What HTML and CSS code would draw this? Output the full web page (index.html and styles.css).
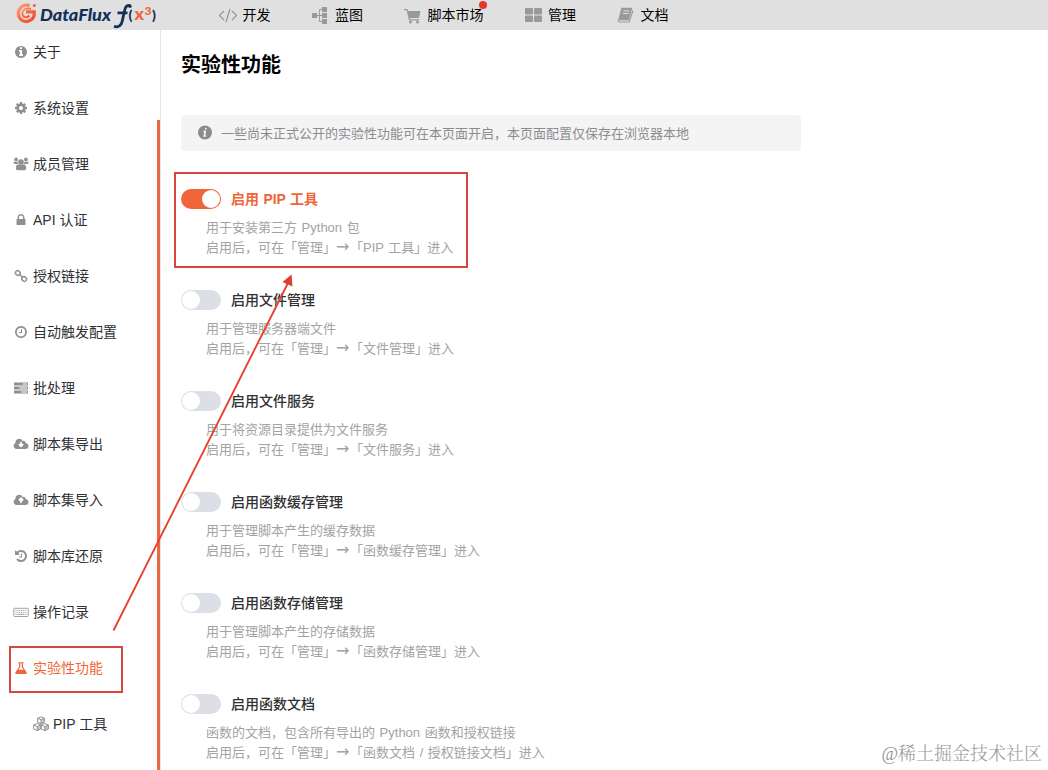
FILE: index.html
```html
<!DOCTYPE html>
<html lang="zh-CN">
<head>
  <meta charset="UTF-8">
  <title>实验性功能</title>
  <link rel="stylesheet" href="styles.css">
</head>
<body>
  <div class="navbar">
    <svg class="logo" width="146" height="30" viewBox="0 0 146 30">
      <defs>
        <linearGradient id="logoColor" x1="0" y1="0" x2="1" y2="1">
          <stop offset="0" stop-color="#ffa584"/>
          <stop offset="0.5" stop-color="#f7683f"/>
          <stop offset="1" stop-color="#ef4a35"/>
        </linearGradient>
      </defs>
      <g fill="none" stroke="url(#logoColor)">
        <path d="M13.500 5.500C7 3.500 2.200 8 2.300 13.500C2.700 20 8 22.500 12.500 21C17 19.500 18.600 16 18.300 11.800H10" stroke-width="3.200"/>
        <path d="M15 8.800C10.500 7.500 6.300 9.500 6.300 13.500C6.500 17.500 11 18.500 13.500 15.500" stroke-width="2"/>
      </g>
      <circle cx="18.300" cy="5.500" r="1.500" fill="#f4623f"/>
      <text class="logo-name" x="24" y="20.500" textLength="71" lengthAdjust="spacingAndGlyphs">DataFlux</text>
      <path d="M114.500 6C110.500 4 109 7.500 108 13L106.300 21C105.400 25.500 102.500 28 98 26.300M101.500 12.800H111.500" fill="none" stroke="#14305a" stroke-width="2.800"/>
      <circle cx="114" cy="6.300" r="1.700" fill="#14305a"/>
      <text class="logo-paren" x="112.500" y="19.500">(</text>
      <text class="logo-x" x="118.500" y="20" textLength="9.500" lengthAdjust="spacingAndGlyphs">x</text>
      <text class="logo-pow" x="128.500" y="15">3</text>
      <text class="logo-paren" x="136" y="19.500">)</text>
    </svg>
    <div class="nav-links">
      <a><svg width="20" height="20" viewBox="0 0 20 20" fill="none" stroke="#999" stroke-width="1.300"><path d="M6 6L1.500 10.500L6 15M14 6L18.500 10.500L14 15M12 4L8 17"/></svg>开发</a>
      <a><svg width="20" height="20" viewBox="0 0 20 20" fill="#999"><path d="M1 8h5v5H1zM11 2h5v5h-5zM11 8h5v5h-5zM11 14h5v5h-5z"/><path d="M6 10.500h5M11 4.500H8.500v12H11" fill="none" stroke="#999"/></svg>蓝图</a>
      <a><svg width="20" height="20" viewBox="0 0 20 20" fill="#999"><path d="M1 4h3.500l.5 2h12.500l-1.500 7H7l.3 1.300H16v1.200H6L3.700 5.200H1z"/><circle cx="7.500" cy="17" r="1.500"/><circle cx="14.500" cy="17" r="1.500"/></svg>脚本市场<i class="dot"></i></a>
      <a><svg width="20" height="20" viewBox="0 0 20 20" fill="#999"><rect x="1" y="3" width="8" height="6.500" rx="1"/><rect x="10" y="3" width="8" height="6.500" rx="1"/><rect x="1" y="10.500" width="8" height="6.500" rx="1"/><rect x="10" y="10.500" width="8" height="6.500" rx="1"/></svg>管理</a>
      <a><svg width="20" height="20" viewBox="0 0 20 20"><path d="M6 3.500h9.500L12 14.500H3.200z" fill="#999" stroke="#999" stroke-width="1.500" stroke-linejoin="round"/><path d="M7.500 6h6M6.800 8.500h6" stroke="#e0e0e0"/><path d="M2.600 14.500c-1 1.500 0 2.500 1 2.500h9.400l4-11.500" fill="none" stroke="#999" stroke-width="1.200"/></svg>文档</a>
    </div>
  </div>

  <div class="main">
    <div class="sidebar">
      <div class="menu" id="menu"></div>
      <div class="scrollbar"></div>
    </div>

    <div class="content">
      <h1>实验性功能</h1>
      <div class="alert">
        <svg width="16" height="16" viewBox="0 0 16 16"><circle cx="8" cy="7.500" r="7" fill="#8c8c90"/><path d="M9 2.800l-.3 1.500M6.600 6.300H8.200L7.300 11H9" fill="none" stroke="#f4f4f5" stroke-width="1.700"/></svg>
        <span>一些尚未正式公开的实验性功能可在本页面开启，本页面配置仅保存在浏览器本地</span>
      </div>
      <div id="features"></div>
    </div>
  </div>

  <div class="mark mark-menu"></div>
  <div class="mark mark-feature"></div>
  <svg class="pointer" width="200" height="370" viewBox="100 270 200 370">
    <path d="M113.500 630.500L288 283" stroke="#e5432f" stroke-width="1.900"/>
    <path d="M291.500 274.500L292.500 286.500L282.500 282z" fill="#e03c31"/>
  </svg>
  <div class="watermark">@稀土掘金技术社区</div>

  <script>
    const icons = {
      info: '<path d="M1152 1376v-160q0-14-9-23t-23-9h-96v-512q0-14-9-23t-23-9h-320q-14 0-23 9t-9 23v160q0 14 9 23t23 9h96v320h-96q-14 0-23 9t-9 23v160q0 14 9 23t23 9h448q14 0 23-9t9-23zm-128-896v-160q0-14-9-23t-23-9h-192q-14 0-23 9t-9 23v160q0 14 9 23t23 9h192q14 0 23-9t9-23zm640 416q0 209-103 385.500t-279.500 279.500-385.500 103-385.500-103-279.500-279.500-103-385.500 103-385.500 279.500-279.500 385.500-103 385.500 103 279.500 279.500 103 385.500z"/>',
      cog: '<path d="M1152 896q0-106-75-181t-181-75-181 75-75 181 75 181 181 75 181-75 75-181zm512-109v222q0 12-8 23t-20 13l-185 28q-19 54-39 91 35 50 107 138 10 12 10 25t-9 23q-27 37-99 108t-94 71q-12 0-26-9l-138-108q-44 23-91 38-16 136-29 186-7 28-36 28h-222q-14 0-24.500-8.500t-11.500-21.500l-28-184q-49-16-90-37l-141 107q-10 9-25 9-14 0-25-11-126-114-165-168-7-10-7-23 0-12 8-23 15-21 51-66.500t54-70.500q-27-50-41-99l-183-27q-13-2-21-12.500t-8-23.500v-222q0-12 8-23t19-13l186-28q14-46 39-92-40-57-107-138-10-12-10-24 0-10 9-23 26-36 98.500-107.500t94.500-71.500q13 0 26 10l138 107q44-23 91-38 16-136 29-186 7-28 36-28h222q14 0 24.500 8.500t11.500 21.500l28 184q49 16 90 37l142-107q9-9 24-9 13 0 25 10 129 119 165 170 7 8 7 22 0 12-8 23-15 21-51 66.500t-54 70.500q26 50 41 98l183 28q13 2 21 12.500t8 23.500z"/>',
      users: '<circle cx="896" cy="640" r="360"/><circle cx="270" cy="310" r="240"/><circle cx="1522" cy="310" r="240"/><path d="M500 920q396 200 792 0q270 90 270 480q0 300-230 300H460q-230 0-230-300q0-390 270-480zM20 570q220 60 430 0q0 200 120 330H200q-270 0-270-150q0-140 90-180zM1772 570q-220 60-430 0q0 200-120 330h370q270 0 270-150q0-140-90-180z"/>',
      lock: '<path d="M640 768h512v-192q0-106-75-181t-181-75-181 75-75 181v192zm832 96v576q0 40-28 68t-68 28h-960q-40 0-68-28t-28-68v-576q0-40 28-68t68-28h32v-192q0-184 132-316t316-132 316 132 132 316v192h32q40 0 68 28t28 68z"/>',
      link: '<g fill="none" stroke="currentColor" stroke-width="190"><rect x="180" y="240" width="620" height="540" rx="260" transform="rotate(40 490 510)"/><rect x="1000" y="1010" width="620" height="540" rx="260" transform="rotate(40 1310 1280)"/><path d="M640 650L1150 1130"/></g>',
      clock: '<path d="M1024 544v448q0 14-9 23t-23 9h-320q-14 0-23-9t-9-23v-64q0-14 9-23t23-9h224v-352q0-14 9-23t23-9h64q14 0 23 9t9 23zm416 352q0-148-73-273t-198-198-273-73-273 73-198 198-73 273 73 273 198 198 273 73 273-73 198-198 73-273zm224 0q0 209-103 385.500t-279.500 279.500-385.500 103-385.500-103-279.500-279.500-103-385.500 103-385.500 279.500-279.500 385.500-103 385.500 103 279.500 279.500 103 385.500z"/>',
      tasks: '<path d="M0 180h1792v390H0zM0 700h1792v390H0zM0 1220h1792v390H0z"/><path d="M1130 375h540M700 895h970M950 1415h720" stroke="#fff" stroke-width="130"/>',
      download: '<path d="M-50 1120q0-260 240-380q-10-490 460-530q330-10 460 300q330-90 410 250q330 70 330 380q0 370-390 400H350q-400-30-400-420z"/><path d="M900 600v500M620 920l280 280l280-280" fill="none" stroke="#fff" stroke-width="210"/>',
      upload: '<path d="M-50 1120q0-260 240-380q-10-490 460-530q330-10 460 300q330-90 410 250q330 70 330 380q0 370-390 400H350q-400-30-400-420z"/><path d="M900 1280V750M620 950l280-280l280 280" fill="none" stroke="#fff" stroke-width="210"/>',
      history: '<path d="M1664 896q0 156-61 298t-164 245-245 164-298 61q-172 0-327-72.500t-264-204.500q-7-10-6.500-22.500t8.500-20.500l137-138q10-9 25-9 16 2 23 12 73 95 179 147t225 52q104 0 198.500-40.500t163.500-109.500 109.500-163.500 40.500-198.500-40.500-198.500-109.500-163.500-163.500-109.500-198.500-40.500q-98 0-188 35.500t-160 101.500l137 138q31 30 14 69-17 40-59 40h-448q-26 0-45-19t-19-45v-448q0-42 40-59 39-17 69 14l130 129q107-101 244.500-156.500t284.500-55.500q156 0 298 61t245 164 164 245 61 298zm-640-288v448q0 14-9 23t-23 9h-320q-14 0-23-9t-9-23v-64q0-14 9-23t23-9h224v-352q0-14 9-23t23-9h64q14 0 23 9t9 23z"/>',
      keyboard: '<g fill="none" stroke="currentColor" stroke-width="110"><rect x="-30" y="420" width="1850" height="1050" rx="100"/><path d="M200 700h1400M200 940h1400" stroke-dasharray="130 100"/><path d="M200 1190h150M460 1190h870M1430 1190h170"/></g>',
      flask: '<path d="M560 150h672v150h-90v420l480 750q90 190-130 190H300q-220 0-130-190l480-750V300h-90zM800 300v460L570 1110h652L992 760V300z" fill-rule="evenodd"/>',
      cubes: '<g fill="none" stroke="currentColor" stroke-width="110" stroke-linejoin="round"><path d="M896 100l380 150v440l-380 180l-380-180V250zM516 250l380 180l380-180M896 430v440M470 840l400 170v440l-400 190l-400-190v-440zM70 1010l400 180l400-180M470 1190v450M1322 840l400 170v440l-400 190l-400-190v-440zM922 1010l400 180l400-180M1322 1190v450"/></g><path d="M896 430l380-180v440l-380 180zM470 1190l400-180v440l-400 190zM1322 1190l400-180v440l-400 190z" opacity=".5"/>'
    };

    const menu = [
      { icon: "info", name: "关于" },
      { icon: "cog", name: "系统设置" },
      { icon: "users", name: "成员管理" },
      { icon: "lock", name: "API 认证" },
      { icon: "link", name: "授权链接" },
      { icon: "clock", name: "自动触发配置" },
      { icon: "tasks", name: "批处理" },
      { icon: "download", name: "脚本集导出" },
      { icon: "upload", name: "脚本集导入" },
      { icon: "history", name: "脚本库还原" },
      { icon: "keyboard", name: "操作记录" },
      { icon: "flask", name: "实验性功能", cls: "active" },
      { icon: "cubes", name: "PIP 工具", cls: "sub" }
    ];

    const features = [
      { name: "PIP 工具", desc: "用于安装第三方 Python 包", entry: "PIP 工具", on: true },
      { name: "文件管理", desc: "用于管理服务器端文件", entry: "文件管理" },
      { name: "文件服务", desc: "用于将资源目录提供为文件服务", entry: "文件服务" },
      { name: "函数缓存管理", desc: "用于管理脚本产生的缓存数据", entry: "函数缓存管理" },
      { name: "函数存储管理", desc: "用于管理脚本产生的存储数据", entry: "函数存储管理" },
      { name: "函数文档", desc: "函数的文档，包含所有导出的 Python 函数和授权链接", entry: "函数文档 / 授权链接文档" }
    ];

    document.getElementById("menu").innerHTML = menu.map(m => `
      <a class="menu-item ${m.cls || ""}"><svg class="menu-icon" viewBox="0 0 1792 1792" fill="currentColor">${icons[m.icon]}</svg><span>${m.name}</span></a>
    `).join("");

    document.getElementById("features").innerHTML = features.map(f => `
      <div class="feature ${f.on ? "on" : ""}">
        <div class="feature-title"><span class="switch"></span><span class="feature-name">启用${f.on ? " " : ""}${f.name}</span></div>
        <div class="feature-desc">${f.desc}<br>启用后，可在「管理」<span class="arrow">→</span>「${f.entry}」进入</div>
      </div>
    `).join("");
  </script>
</body>
</html>
```
FILE: styles.css
```css
* { box-sizing: border-box; }

body {
  margin: 0;
  height: 770px;
  overflow: hidden;
  position: relative;
  background: #fff;
  color: #303133;
  font-family: "Liberation Sans", "Noto Sans CJK SC", sans-serif;
  font-size: 14px;
}

.navbar {
  height: 30px;
  background: #e0e0e0;
  display: flex;
  align-items: center;
  padding-left: 16px;
}

.logo {
  overflow: visible;
}

.logo-name {
  font: italic 900 17px Lato, sans-serif;
  fill: #14305a;
}

.logo-paren {
  font: 900 14px Lato, sans-serif;
  fill: #14305a;
}

.logo-x {
  font: 900 16px Lato, sans-serif;
  fill: #f4623f;
}

.logo-pow {
  font: 900 12px Lato, sans-serif;
  fill: #f4623f;
}

.nav-links {
  display: flex;
  gap: 40px;
  margin-left: 56px;
}

.nav-links a {
  position: relative;
  display: flex;
  align-items: center;
  gap: 4.500px;
  color: #000;
  line-height: 30px;
}

.dot {
  position: absolute;
  top: 1px;
  right: -3px;
  width: 8px;
  height: 8px;
  border-radius: 50%;
  background: #e8352e;
}

.main {
  display: flex;
  height: 740px;
}

.sidebar {
  width: 161px;
  border-right: 1px solid #e6e6e6;
  display: flex;
  justify-content: space-between;
  overflow: hidden;
}

.menu {
  margin-top: -6px;
}

.menu-item {
  display: flex;
  align-items: center;
  height: 56px;
  padding-left: 13.500px;
  white-space: nowrap;
}

.menu-item span {
  padding-bottom: 2px;
}

.menu-icon {
  width: 14px;
  height: 14px;
  margin-right: 5.500px;
  color: #909090;
  overflow: visible;
}

.menu-item.active,
.menu-item.active .menu-icon {
  color: #f0653a;
}

.menu-item.sub {
  padding-left: 33px;
}

.sub .menu-icon {
  width: 16px;
  height: 16px;
  margin-right: 4px;
}

.scrollbar {
  width: 3px;
  margin-top: 90px;
  background: #e96a42;
}

.content {
  flex: 1;
  padding-left: 20px;
}

h1 {
  margin: 20px 0 35px;
  font-size: 20px;
  line-height: 30px;
  font-weight: bold;
  color: #000;
}

.alert {
  width: 620px;
  height: 36px;
  padding-left: 16px;
  display: flex;
  align-items: center;
  gap: 8px;
  background: #f4f4f4;
  border-radius: 4px;
  color: #8c8c90;
  font-size: 13px;
  margin-bottom: 38px;
}

.alert span {
  padding-bottom: 2px;
}

.feature {
  height: 101px;
}

.feature-title {
  display: flex;
  align-items: center;
  height: 20px;
  font-weight: 500;
  white-space: pre;
}

.feature-name {
  padding-bottom: 2px;
  word-spacing: 0.500px;
}

.switch {
  width: 40px;
  height: 20px;
  margin-right: 10px;
  padding: 1px;
  border-radius: 10px;
  background: #dcdfe6;
}

.switch::after {
  content: "";
  display: block;
  width: 18px;
  height: 18px;
  border-radius: 50%;
  background: #fff;
}

.on .switch {
  background: #f0653a;
}

.on .switch::after {
  margin-left: auto;
}

.on .feature-title {
  color: #f0653a;
  font-weight: bold;
}

.feature-desc {
  margin-top: 9px;
  padding-left: 25px;
  font-size: 13px;
  line-height: 20px;
  word-spacing: 1px;
  color: #a3a3a3;
}

.arrow {
  display: inline-block;
  width: 14px;
  font-family: "DejaVu Sans", sans-serif;
  font-size: 16px;
  line-height: 16px;
}

/* annotations above the page */
.mark {
  position: absolute;
  border: 2px solid #d9463e;
}

.mark-menu {
  left: 9px;
  top: 646px;
  width: 114px;
  height: 47px;
}

.mark-feature {
  left: 174px;
  top: 172px;
  width: 294px;
  height: 96px;
}

.pointer {
  position: absolute;
  left: 100px;
  top: 270px;
}

.watermark {
  position: absolute;
  right: 6px;
  top: 742px;
  font-family: "Liberation Serif", "Noto Serif CJK SC", "Noto Sans CJK SC", serif;
  font-size: 18px;
  font-weight: 300;
  line-height: 24px;
  color: #999;
}
```
